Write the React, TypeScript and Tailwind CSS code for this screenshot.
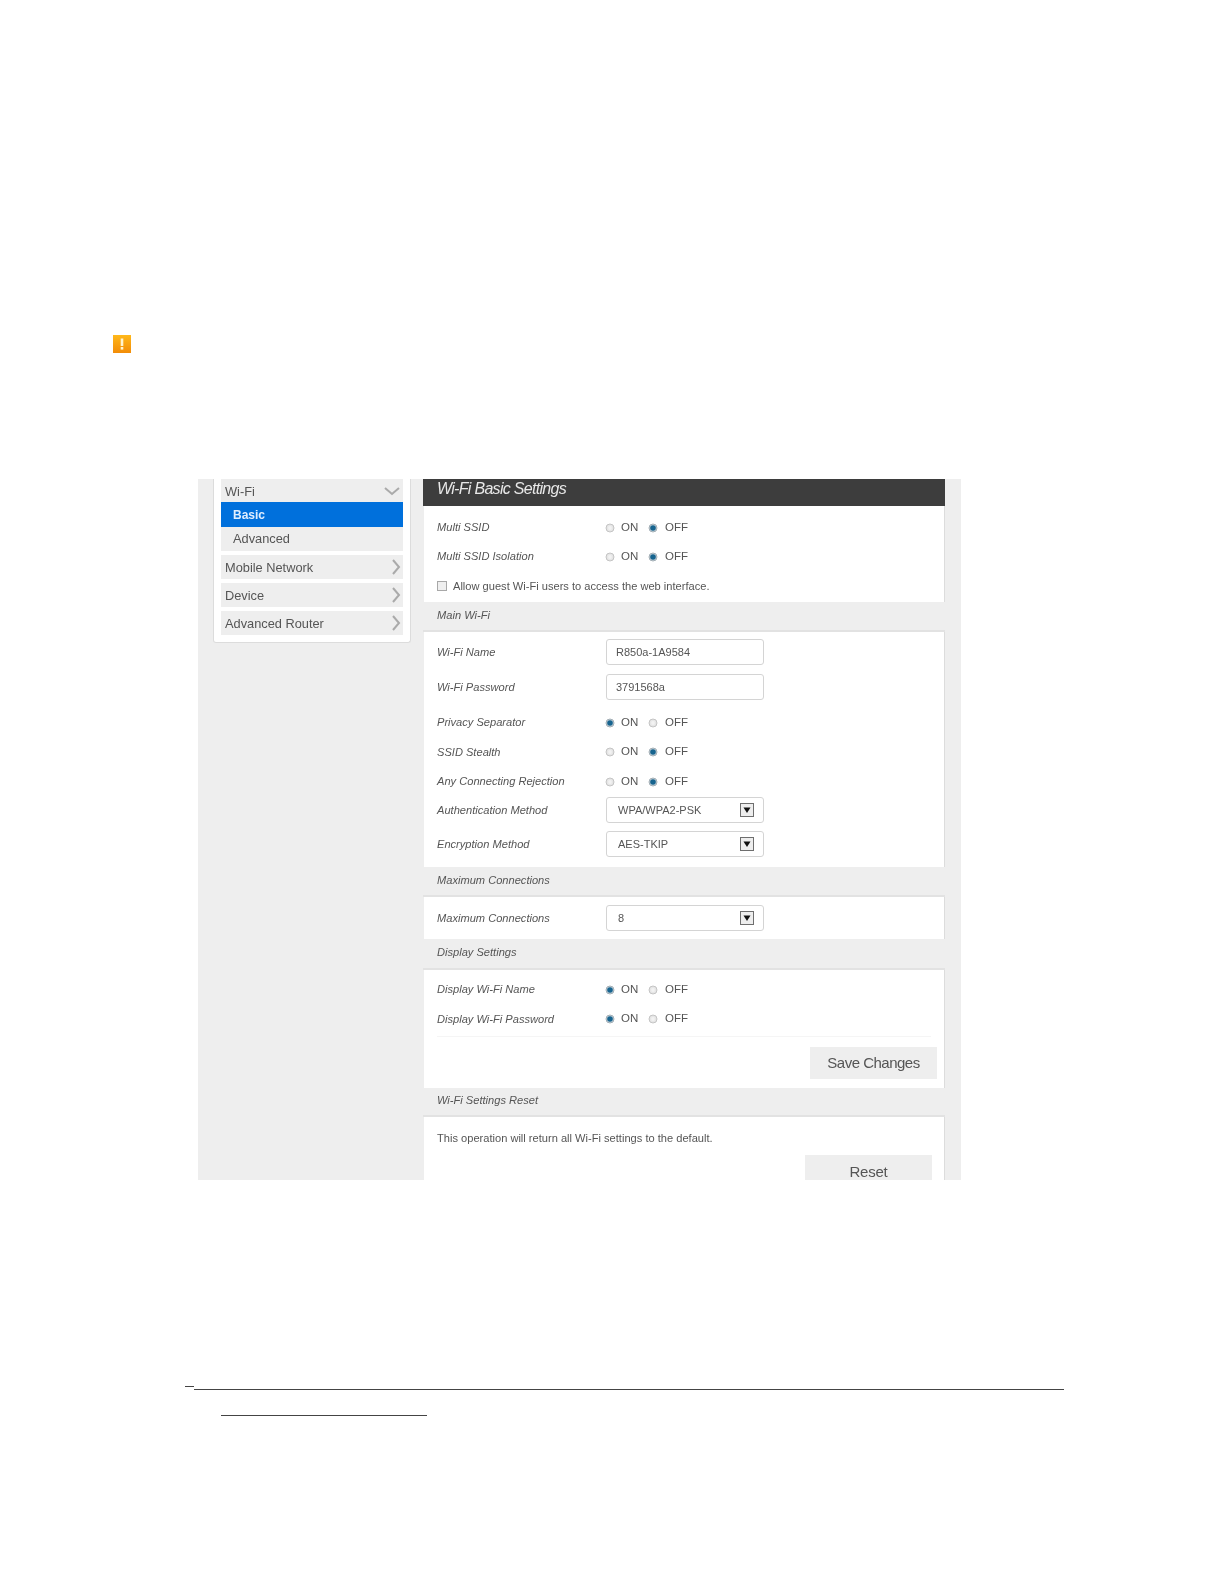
import React from "react";

const font = "[font-family:'Liberation_Sans',Arial,sans-serif]";

function Radio({ on }: { on: boolean }) {
  return (
    <svg width="10" height="10" viewBox="0 0 10 10" className="shrink-0 blur-[0.3px]">
      <circle cx="5" cy="5" r="4" fill={on ? "#c8d3da" : "#e6e6e6"} stroke={on ? "#a3afb6" : "#c4c4c4"} strokeWidth="1" />
      {on ? <circle cx="5" cy="5" r="2.8" fill="#17648f" /> : <circle cx="5" cy="5" r="1.9" fill="#f2f2f2" />}
    </svg>
  );
}

function Label({ children }: { children: React.ReactNode }) {
  return <div className="w-[168px] shrink-0 italic text-[11.1px] text-[#555]">{children}</div>;
}

function RadioRow({ label, on, h = "h-[29px]" }: { label: string; on: boolean; h?: string }) {
  return (
    <div className={`flex items-center ${h}`}>
      <Label>{label}</Label>
      <div className="flex items-center text-[11.5px] text-[#555]">
        <Radio on={on} />
        <span className="ml-[6px] w-[27px]">ON</span>
        <Radio on={!on} />
        <span className="ml-[7px]">OFF</span>
      </div>
    </div>
  );
}

function TextBox({ value }: { value: string }) {
  return (
    <div className="flex items-center w-[158px] h-[26px] ml-[1px] rounded-[3px] border border-[#d4d4d4] pl-[9px] text-[11px] text-[#555]">
      {value}
    </div>
  );
}

function SelectBox({ value }: { value: string }) {
  return (
    <div className="flex items-center justify-between w-[158px] h-[26px] ml-[1px] rounded-[3px] border border-[#d4d4d4] pl-[11px] pr-[9px] text-[11px] text-[#555]">
      <span>{value}</span>
      <svg width="14" height="14" viewBox="0 0 14 14">
        <rect x="0.5" y="0.5" width="13" height="13" fill="#eeeeee" stroke="#6e6e6e" />
        <path d="M3.5 4.5h7L7 10z" fill="#111" />
      </svg>
    </div>
  );
}

function Band({ children, h = "h-[30px]" }: { children: React.ReactNode; h?: string }) {
  return (
    <div className={`flex items-center ${h} pl-[14px] pb-[2px] bg-[#eeeeee] border-b-2 border-[#e2e2e2] italic text-[11.1px] text-[#555]`}>
      {children}
    </div>
  );
}

function Section({ className = "", children }: { className?: string; children: React.ReactNode }) {
  return <div className={`bg-white ml-[1px] pl-[13px] border-r border-[#dcdcdc] ${className}`}>{children}</div>;
}

function NavItem({ label, open }: { label: string; open?: boolean }) {
  return (
    <div className="flex items-center justify-between h-[24px] bg-[#eeeeee] pl-[4px] pr-[2px] text-[12.8px] text-[#555]">
      <span className="pt-[1px]">{label}</span>
      {open ? (
        <svg width="18" height="10" viewBox="0 0 18 10">
          <path d="M2 2l7 6 7-6" fill="none" stroke="#aaa" strokeWidth="2" />
        </svg>
      ) : (
        <svg width="10" height="18" viewBox="0 0 10 18">
          <path d="M2 2l6 7-6 7" fill="none" stroke="#aaa" strokeWidth="2" />
        </svg>
      )}
    </div>
  );
}

export default function App() {
  return (
    <div className={`w-[1224px] h-[1584px] bg-white overflow-hidden ${font}`}>
      <div className="pt-[335px] pl-[113px]">
        <svg width="18" height="18" viewBox="0 0 18 18" className="block blur-[0.4px]">
          <defs>
            <linearGradient id="warn" x1="0" y1="0" x2="0" y2="1">
              <stop offset="0" stopColor="#ffb81a" />
              <stop offset="1" stopColor="#f28c08" />
            </linearGradient>
          </defs>
          <rect width="18" height="18" fill="url(#warn)" />
          <rect x="7.7" y="3.5" width="2.6" height="7.5" fill="#fff4d0" />
          <rect x="7.7" y="12" width="2.6" height="2.6" fill="#fff4d0" />
        </svg>
      </div>

      <div className="mt-[126px] ml-[198px] w-[763px] h-[701px] overflow-hidden flex items-start bg-[#eeeeee] blur-[0.45px]">
        <div className="ml-[15px] w-[198px] h-[164px] shrink-0 bg-white border-x border-b border-[#dcdcdc] rounded-b-[3px] px-[7px]">
          <NavItem label="Wi-Fi" open />
          <div className="flex items-center h-[25px] -mt-[1px] bg-[#0070dc] pl-[12px] text-[12px] font-bold text-[#dfeeff]">Basic</div>
          <div className="flex items-center h-[24px] bg-[#eeeeee] pl-[12px] text-[12.8px] text-[#555]">Advanced</div>
          <div className="mt-[4px] flex flex-col gap-[4px]">
            <NavItem label="Mobile Network" />
            <NavItem label="Device" />
            <NavItem label="Advanced Router" />
          </div>
        </div>

        <div className="ml-[12px] w-[522px] shrink-0">
          <div className="flex items-center h-[27px] bg-[#3d3d3d] pl-[14px] pb-[7px] italic text-[16px] tracking-[-0.7px] text-[#e8e8e8]">
            Wi-Fi Basic Settings
          </div>

          <Section className="pt-[7px] h-[96px]">
            <RadioRow label="Multi SSID" on={false} />
            <RadioRow label="Multi SSID Isolation" on={false} />
            <div className="flex items-center h-[30px] text-[11.1px] text-[#555]">
              <span className="w-[10px] h-[10px] bg-[#efefef] border border-[#a8a8a8] mr-[6px]" />
              Allow guest Wi-Fi users to access the web interface.
            </div>
          </Section>

          <Band>Main Wi-Fi</Band>

          <Section className="pt-[7px] h-[235px]">
            <div className="flex items-center"><Label>Wi-Fi Name</Label><TextBox value="R850a-1A9584" /></div>
            <div className="flex items-center mt-[9px] mb-[8px]"><Label>Wi-Fi Password</Label><TextBox value="3791568a" /></div>
            <RadioRow label="Privacy Separator" on />
            <RadioRow label="SSID Stealth" on={false} h="h-[30px]" />
            <RadioRow label="Any Connecting Rejection" on={false} />
            <div className="flex items-center mt-[1px]"><Label>Authentication Method</Label><SelectBox value="WPA/WPA2-PSK" /></div>
            <div className="flex items-center mt-[8px]"><Label>Encryption Method</Label><SelectBox value="AES-TKIP" /></div>
          </Section>

          <Band>Maximum Connections</Band>

          <Section className="pt-[8px] h-[42px]">
            <div className="flex items-center"><Label>Maximum Connections</Label><SelectBox value="8" /></div>
          </Section>

          <Band h="h-[31px]">Display Settings</Band>

          <Section className="pt-[5px] h-[118px]">
            <RadioRow label="Display Wi-Fi Name" on />
            <RadioRow label="Display Wi-Fi Password" on h="h-[30px]" />
            <div className="h-[1px] mt-[2px] mr-[13px] bg-[#f5f5f5]" />
            <div className="flex justify-end mt-[10px] mr-[7px]">
              <div className="flex items-center justify-center w-[127px] h-[32px] bg-[#eeeeee] text-[15px] tracking-[-0.5px] text-[#555]">Save Changes</div>
            </div>
          </Section>

          <Band h="h-[29px]">Wi-Fi Settings Reset</Band>

          <Section className="h-[63px]">
            <div className="flex items-center h-[38px] pt-[4px] text-[11.1px] text-[#555]">This operation will return all Wi-Fi settings to the default.</div>
            <div className="flex justify-end mr-[12px]">
              <div className="flex items-start justify-center pt-[6px] w-[127px] h-[25px] bg-[#eeeeee] text-[15px] tracking-[-0.2px] text-[#555] overflow-hidden">Reset</div>
            </div>
          </Section>
        </div>
      </div>

      <div className="mt-[206px] ml-[185px] w-[9px] h-[1px] bg-[#444]" />
      <div className="mt-[2px] ml-[194px] w-[870px] h-[1px] bg-[#444]" />
      <div className="mt-[25px] ml-[221px] w-[206px] h-[1px] bg-[#444]" />
    </div>
  );
}
